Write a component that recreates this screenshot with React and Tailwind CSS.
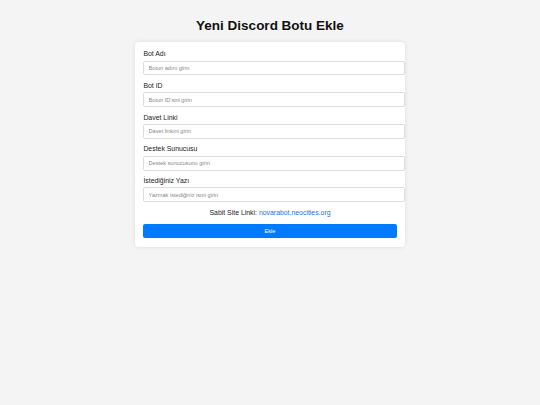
const fields = [
  { label: 'Bot Adı', placeholder: 'Botun adını girin' },
  { label: 'Bot ID', placeholder: "Botun ID'sini girin" },
  { label: 'Davet Linki', placeholder: 'Davet linkini girin' },
  { label: 'Destek Sunucusu', placeholder: 'Destek sunucusunu girin' },
  { label: 'İstediğiniz Yazı', placeholder: 'Yazmak istediğiniz ismi girin' },
]

export default function App() {
  return (
    <div className="min-h-[405px] bg-[#f4f4f4] pt-[17.5px] font-['Liberation_Sans',Arial,sans-serif] text-[#333]">
      <h1 className="text-center text-[13.5px] leading-[15.5px] font-bold text-[#111] mb-[9px]">Yeni Discord Botu Ekle</h1>
      <div className="mx-auto w-[270px] bg-white rounded-[4px] shadow-[0_0_4px_rgba(0,0,0,0.1)] p-[8.4px]">
        {fields.map((f) => (
          <div key={f.label}>
            <label className="block text-[6.9px] leading-[8px] mb-[2.3px] text-[#222]">{f.label}</label>
            <input
              type="text"
              placeholder={f.placeholder}
              className="block w-[262px] h-[14.8px] px-[4.2px] border border-[#ddd] rounded-[2px] text-[5.6px] mb-[6.6px] placeholder:text-[#888] outline-none"
            />
          </div>
        ))}
        <p className="text-center text-[6.9px] leading-[8px] mt-[0.6px] mb-[7px] text-[#222]">
          Sabit Site Linki: <a className="text-[#1a73e8]" href="#">novarabot.neocities.org</a>
        </p>
        <button className="block w-full h-[14.4px] bg-[#007bff] text-white text-[5.6px] rounded-[2px]">Ekle</button>
      </div>
    </div>
  )
}
